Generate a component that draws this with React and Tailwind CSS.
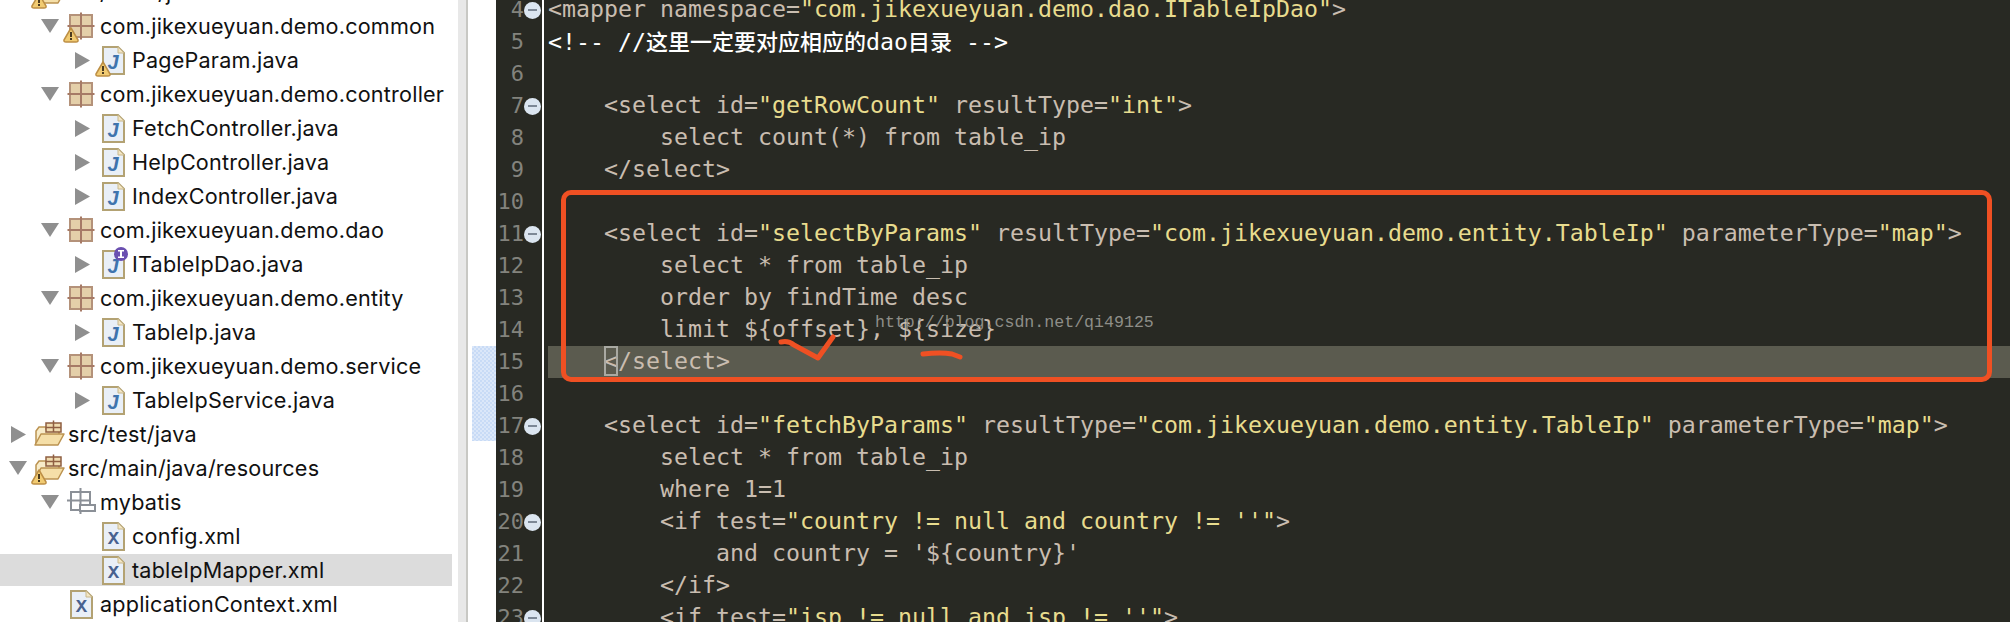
import React from "react";

const TREE = [
  { label: "src/main/java", level: 0, arrow: "down", icon: "srcWarn" },
  { label: "com.jikexueyuan.demo.common", level: 1, arrow: "down", icon: "pkgWarn" },
  { label: "PageParam.java", level: 2, arrow: "right", icon: "javaWarn" },
  { label: "com.jikexueyuan.demo.controller", level: 1, arrow: "down", icon: "pkg" },
  { label: "FetchController.java", level: 2, arrow: "right", icon: "java" },
  { label: "HelpController.java", level: 2, arrow: "right", icon: "java" },
  { label: "IndexController.java", level: 2, arrow: "right", icon: "java" },
  { label: "com.jikexueyuan.demo.dao", level: 1, arrow: "down", icon: "pkg" },
  { label: "ITableIpDao.java", level: 2, arrow: "right", icon: "javaIface" },
  { label: "com.jikexueyuan.demo.entity", level: 1, arrow: "down", icon: "pkg" },
  { label: "TableIp.java", level: 2, arrow: "right", icon: "java" },
  { label: "com.jikexueyuan.demo.service", level: 1, arrow: "down", icon: "pkg" },
  { label: "TableIpService.java", level: 2, arrow: "right", icon: "java" },
  { label: "src/test/java", level: 0, arrow: "right", icon: "src" },
  { label: "src/main/java/resources", level: 0, arrow: "down", icon: "srcWarn" },
  { label: "mybatis", level: 1, arrow: "down", icon: "folder" },
  { label: "config.xml", level: 2, icon: "xml" },
  { label: "tableIpMapper.xml", level: 2, icon: "xml", selected: true },
  { label: "applicationContext.xml", level: 1, icon: "xml" },
];

const INDENT = ["pl-[7px]", "pl-[39px]", "pl-[71px]"];

const CODE = [
  [4, '<mapper namespace="com.jikexueyuan.demo.dao.ITableIpDao">', true],
  [5, null],
  [6, ""],
  [7, '    <select id="getRowCount" resultType="int">', true],
  [8, "        select count(*) from table_ip"],
  [9, "    </select>"],
  [10, ""],
  [11, '    <select id="selectByParams" resultType="com.jikexueyuan.demo.entity.TableIp" parameterType="map">', true],
  [12, "        select * from table_ip"],
  [13, "        order by findTime desc"],
  [14, "        limit ${offset}, ${size}"],
  [15, "cursor"],
  [16, ""],
  [17, '    <select id="fetchByParams" resultType="com.jikexueyuan.demo.entity.TableIp" parameterType="map">', true],
  [18, "        select * from table_ip"],
  [19, "        where 1=1"],
  [20, "        <if test=\"country != null and country != ''\">", true],
  [21, "            and country = '${country}'"],
  [22, "        </if>"],
  [23, "        <if test=\"isp != null and isp != ''\">", true],
];

function Warning() {
  return (
    <g>
      <path d="M10 19 L17 31 Q17.500 33 15 33 H5 Q2.500 33 3 31 Z" fill="#f1cb72" stroke="#bd8f45" strokeWidth="1.500" strokeLinejoin="round" />
      <rect x="9" y="23" width="2" height="5" fill="#4a3a20" />
      <rect x="9" y="29" width="2" height="2" fill="#4a3a20" />
    </g>
  );
}

function Package() {
  return (
    <g>
      <rect x="9" y="6" width="22" height="22" fill="#e4cfa9" stroke="#b4927a" strokeWidth="2" />
      <path d="M20 3.500 V30.500 M6.500 17 H33.500" stroke="#a67a66" strokeWidth="2" />
    </g>
  );
}

function Page({ children }) {
  return (
    <g>
      <path d="M10 4 H25 L31 10 V31 H10 Z" fill="#e9eff7" stroke="#b3a273" strokeWidth="2" />
      <path d="M25 4 V10 H31 Z" fill="#f3e6c4" stroke="#c9b88c" strokeWidth="1" />
      {children}
    </g>
  );
}

function JavaPage() {
  return (
    <Page>
      <text x="20" y="26" textAnchor="middle" fontFamily="Liberation Sans" fontStyle="italic" fontWeight="700" fontSize="20" fill="#3f74ad">J</text>
    </Page>
  );
}

function SrcFolder() {
  return (
    <g>
      <path d="M7 27 V14 L10 10 H17 V12 H30 V17" fill="#f8ecc9" stroke="#bb9250" strokeWidth="1.500" />
      <rect x="17" y="6" width="15" height="9" fill="#f0dcb0" stroke="#8f5f42" strokeWidth="1.500" />
      <path d="M24.500 3.500 V15 M17 10.500 H32" stroke="#8f5f42" strokeWidth="1.500" />
      <path d="M6 28 L12 17 H35 L29 28 Z" fill="#f5dfa8" stroke="#bb9250" strokeWidth="1.500" strokeLinejoin="round" />
    </g>
  );
}

function TreeIcon({ name }) {
  return (
    <svg width="39" height="34" viewBox="0 0 39 34" className="shrink-0">
      {(name === "pkg" || name === "pkgWarn") && <Package />}
      {(name === "java" || name === "javaWarn" || name === "javaIface") && <JavaPage />}
      {name === "xml" && (
        <Page>
          <text x="20.500" y="25" textAnchor="middle" fontFamily="Liberation Mono" fontWeight="700" fontSize="19" fill="#48618f">X</text>
        </Page>
      )}
      {(name === "src" || name === "srcWarn") && <SrcFolder />}
      {name === "folder" && (
        <g>
          <rect x="10" y="7" width="19" height="18" fill="#fff" stroke="#8b9097" strokeWidth="2" />
          <path d="M19.500 3 V29 M6 15.500 H29" stroke="#8b9097" strokeWidth="2" />
          <rect x="19" y="20" width="15" height="6" fill="#fff" stroke="#8b9097" strokeWidth="2" />
        </g>
      )}
      {(name === "pkgWarn" || name === "javaWarn" || name === "srcWarn") && <Warning />}
      {name === "javaIface" && (
        <g>
          <circle cx="28" cy="7" r="7" fill="#6a4fb0" />
          <rect x="27" y="3" width="2" height="8" fill="#fff" />
          <rect x="25" y="3" width="6" height="1.500" fill="#fff" />
          <rect x="25" y="9.500" width="6" height="1.500" fill="#fff" />
        </g>
      )}
    </svg>
  );
}

function Arrow({ dir }) {
  return (
    <div className="w-[22px] shrink-0 flex justify-center">
      {dir === "down" && (
        <svg width="18" height="14" viewBox="0 0 18 14"><path d="M0 0 H18 L9 14 Z" fill="#8f8f8f" /></svg>
      )}
      {dir === "right" && (
        <svg width="15" height="17" viewBox="0 0 15 17"><path d="M0 0 L15 8.500 L0 17 Z" fill="#8f8f8f" /></svg>
      )}
    </div>
  );
}

function TreeRow({ row }) {
  return (
    <div
      className={`h-[34px] flex items-center whitespace-nowrap ${INDENT[row.level]} ${
        row.selected ? "bg-[#dcdcdc] border-y border-white" : ""
      }`}
    >
      <Arrow dir={row.arrow} />
      <TreeIcon name={row.icon} />
      <span className="text-[21.6px] text-[#111111] font-['Inter','Liberation_Sans',sans-serif] tracking-[0.2px]">{row.label}</span>
    </div>
  );
}

function CodeText({ text }) {
  const parts = text.split(/("[^"]*")/);
  return parts.map((part, i) => (
    <span key={i} className={part.startsWith('"') ? "text-[#e8dc8e]" : ""}>{part}</span>
  ));
}

function CodeLine({ num, text, fold }) {
  const current = text === "cursor";
  return (
    <div className="flex h-[32px] leading-[32px]">
      <div className="w-[48px] shrink-0 flex items-center border-r-2 border-white">
        <span className="w-[28px] text-right text-[22px] text-[#83837d]">{num}</span>
        {fold && (
          <span className="w-[17px] h-[17px] rounded-full bg-[#dbe5f0] flex items-center justify-center">
            <span className="w-[9px] h-[2px] bg-[#7d8896]" />
          </span>
        )}
      </div>
      <div className={`flex-1 ml-[4px] whitespace-pre leading-[29px] ${current ? "bg-[#5b5b4f]" : ""}`}>
        {text === null && (
          <span className="text-white">
            {"<!-- //"}
            <span className="text-[22px] font-medium font-['Noto_Sans_CJK_SC',sans-serif]">这里一定要对应相应的</span>
            dao
            <span className="text-[22px] font-medium font-['Noto_Sans_CJK_SC',sans-serif]">目录</span>
            {" -->"}
          </span>
        )}
        {current && (
          <span>
            {"    "}
            <span className="relative">
              <span className="absolute left-0 -top-[1px] w-[14px] h-[30px] border-2 border-[#a9a9a2]" />
              {"<"}
            </span>
            /select&gt;
          </span>
        )}
        {text !== null && !current && <CodeText text={text} />}
      </div>
    </div>
  );
}

export default function App() {
  return (
    <div className="w-[2010px] h-[622px] flex overflow-hidden bg-white">
      {/* Package explorer */}
      <div className="w-[458px] shrink-0 pr-[6px] -mt-[25px]">
        {TREE.map((row) => (
          <TreeRow key={row.label} row={row} />
        ))}
      </div>

      {/* scrollbar track */}
      <div className="w-[10px] shrink-0 bg-[#e8e8e8] border-r-2 border-[#c8c8c4]" />

      {/* overview ruler */}
      <div className="w-[28px] shrink-0 relative">
        <div className="absolute left-[4px] right-0 top-[346px] h-[95px] bg-[repeating-conic-gradient(#c8dbf6_0_25%,#dbe7f9_0_50%)] bg-[length:4px_4px]" />
      </div>

      {/* Editor */}
      <div className="flex-1 relative overflow-hidden bg-[#282923] text-[#c9bdb0] text-[23.25px] font-['DejaVu_Sans_Mono',monospace]">
        <div className="-mt-[6px]">
          {CODE.map(([num, text, fold]) => (
            <CodeLine key={num} num={num} text={text} fold={fold} />
          ))}
        </div>

        {/* watermark */}
        <div className="absolute left-[379px] top-[311px] text-[16.6px] leading-[24px] text-[#8e8e88] font-['Liberation_Mono',monospace]">
          http://blog.csdn.net/qi49125
        </div>

        {/* hand drawn annotations */}
        <div className="absolute left-[65px] top-[190px] w-[1431px] h-[192px] border-[5px] border-[#ef5023] rounded-[10px]" />
        <svg className="absolute left-0 top-0" width="600" height="400" viewBox="0 0 600 400" fill="none">
          <path d="M285 342 Q292 340 298 345 L322 358 L337 337" stroke="#ef5023" strokeWidth="5" strokeLinecap="round" strokeLinejoin="round" />
          <path d="M427 354 Q445 352 456 354 L464 357" stroke="#ef5023" strokeWidth="5" strokeLinecap="round" strokeLinejoin="round" />
        </svg>
      </div>
    </div>
  );
}
